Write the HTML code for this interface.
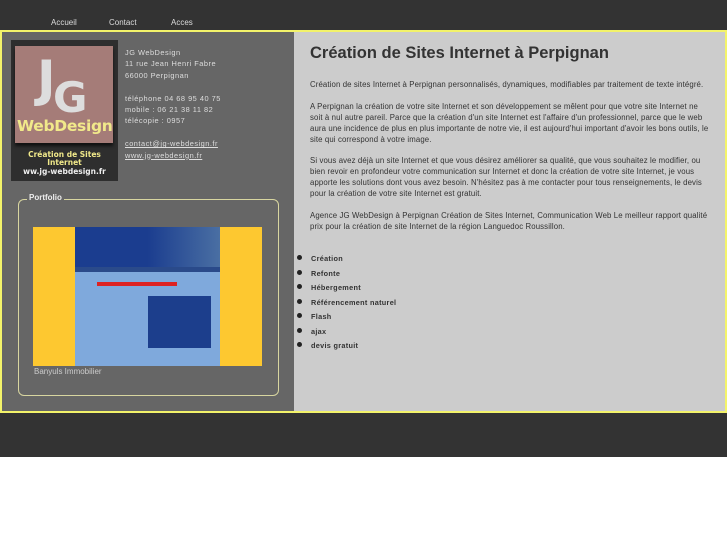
<!DOCTYPE html>
<html><head><meta charset="utf-8"><style>
*{margin:0;padding:0}
body{width:727px;height:545px;background:#fff;font-family:"Liberation Sans",sans-serif;position:relative;overflow:hidden}
.a{position:absolute}
#top{left:0;top:0;width:727px;height:457px;background:#333}
#nav a{position:absolute;top:18px;color:#ddd;font-size:8px;text-decoration:none}
#box{left:0;top:30px;width:723px;height:379px;border:2px solid #f3f36a;background:#ccc}
#left{left:2px;top:32px;width:292px;height:379px;background:#666}
#logo{left:11px;top:40px;width:107px;height:141px;background:#2e2e2e}
#logo .sq{position:absolute;left:4px;top:6px;width:98px;height:97px;background:#a57c78;box-shadow:0 3px 3px #111}
#info{left:125px;top:47px;color:#ddd;font-size:7.4px;line-height:11.4px;letter-spacing:.5px}
#info u{color:#ddd}
#pf{left:18px;top:199px;width:259px;height:195px;border:1px solid #d8d6a0;border-radius:6px}
.t{color:#333;font-size:7.8px;line-height:10.9px;letter-spacing:.12px}
ul{list-style:none}
li{position:relative;padding-left:14px;height:14.5px;font-size:7.3px;font-weight:bold;color:#333;letter-spacing:.3px}
li:before{content:"";position:absolute;left:0;top:1px;width:5px;height:5px;border-radius:50%;background:#222}
</style></head><body>
<div id="top" class="a"></div>
<div id="nav"><a style="left:51px">Accueil</a><a style="left:109px">Contact</a><a style="left:171px">Acces</a></div>
<div id="box" class="a"></div>
<div id="left" class="a"></div>
<div id="logo" class="a"><div class="sq">
<div style="position:absolute;left:22px;top:8px;font-size:50px;font-weight:bold;color:#ddd;font-family:'DejaVu Sans',sans-serif;line-height:50px">J</div>
<div style="position:absolute;left:38px;top:30px;font-size:42px;font-weight:bold;color:#ddd;font-family:'DejaVu Sans',sans-serif;line-height:44px">G</div>
<div style="position:absolute;left:2px;top:71px;font-size:15.5px;font-weight:bold;color:#f1e98a;font-family:'DejaVu Sans',sans-serif;letter-spacing:-.3px">WebDesign</div></div>
<div style="position:absolute;left:0;top:111px;width:107px;text-align:center;font-size:7.5px;font-weight:bold;line-height:8.3px;font-family:'DejaVu Sans',sans-serif"><span style="color:#f1e98a">Création de Sites<br>Internet</span><br><span style="color:#eee">ww.jg-webdesign.fr</span></div></div>
<div id="info" class="a">JG WebDesign<br>11 rue Jean Henri Fabre<br>66000 Perpignan<br><br>téléphone 04 68 95 40 75<br>mobile : 06 21 38 11 82<br>télécopie : 0957<br><br><u>contact@jg-webdesign.fr</u><br><u>www.jg-webdesign.fr</u></div>
<div id="pf" class="a"></div>
<div class="a" style="left:27px;top:193px;background:#666;padding:0 2px;color:#eee;font-size:8px;font-weight:bold">Portfolio</div>
<div class="a" style="left:33px;top:227px;width:229px;height:139px;background:#fdc830"></div>
<div class="a" style="left:75px;top:227px;width:145px;height:139px;background:#7fa9dc"></div>
<div class="a" style="left:75px;top:227px;width:145px;height:40px;background:linear-gradient(90deg,#1b3d8f 50%,#4a6fa3)"></div>
<div class="a" style="left:75px;top:267px;width:145px;height:5px;background:#2a4a8a"></div>
<div class="a" style="left:148px;top:296px;width:63px;height:52px;background:#1c3e8c"></div>
<div class="a" style="left:97px;top:282px;width:80px;height:4px;background:#d22"></div>
<div class="a" style="left:34px;top:367px;color:#ccc;font-size:8px">Banyuls Immobilier</div>
<h1 class="a" style="left:310px;top:44px;font-size:16.5px;color:#333;font-weight:bold">Création de Sites Internet à Perpignan</h1>
<div class="a t" style="left:310px;top:80px;width:400px">Création de sites Internet à Perpignan personnalisés, dynamiques, modifiables par traitement de texte intégré.<br><br>A Perpignan la création de votre site Internet et son développement se mêlent pour que votre site Internet ne soit à nul autre pareil. Parce que la création d'un site Internet est l'affaire d'un professionnel, parce que le web aura une incidence de plus en plus importante de notre vie, il est aujourd'hui important d'avoir les bons outils, le site qui correspond à votre image.<br><br>Si vous avez déjà un site Internet et que vous désirez améliorer sa qualité, que vous souhaitez le modifier, ou bien revoir en profondeur votre communication sur Internet et donc la création de votre site Internet, je vous apporte les solutions dont vous avez besoin. N'hésitez pas à me contacter pour tous renseignements, le devis pour la création de votre site Internet est gratuit.<br><br>Agence JG WebDesign à Perpignan Création de Sites Internet, Communication Web Le meilleur rapport qualité prix pour la création de site Internet de la région Languedoc Roussillon.</div>
<ul class="a" style="left:297px;top:254px"><li>Création</li><li>Refonte</li><li>Hébergement</li><li>Référencement naturel</li><li>Flash</li><li>ajax</li><li>devis gratuit</li></ul>
</body></html>
